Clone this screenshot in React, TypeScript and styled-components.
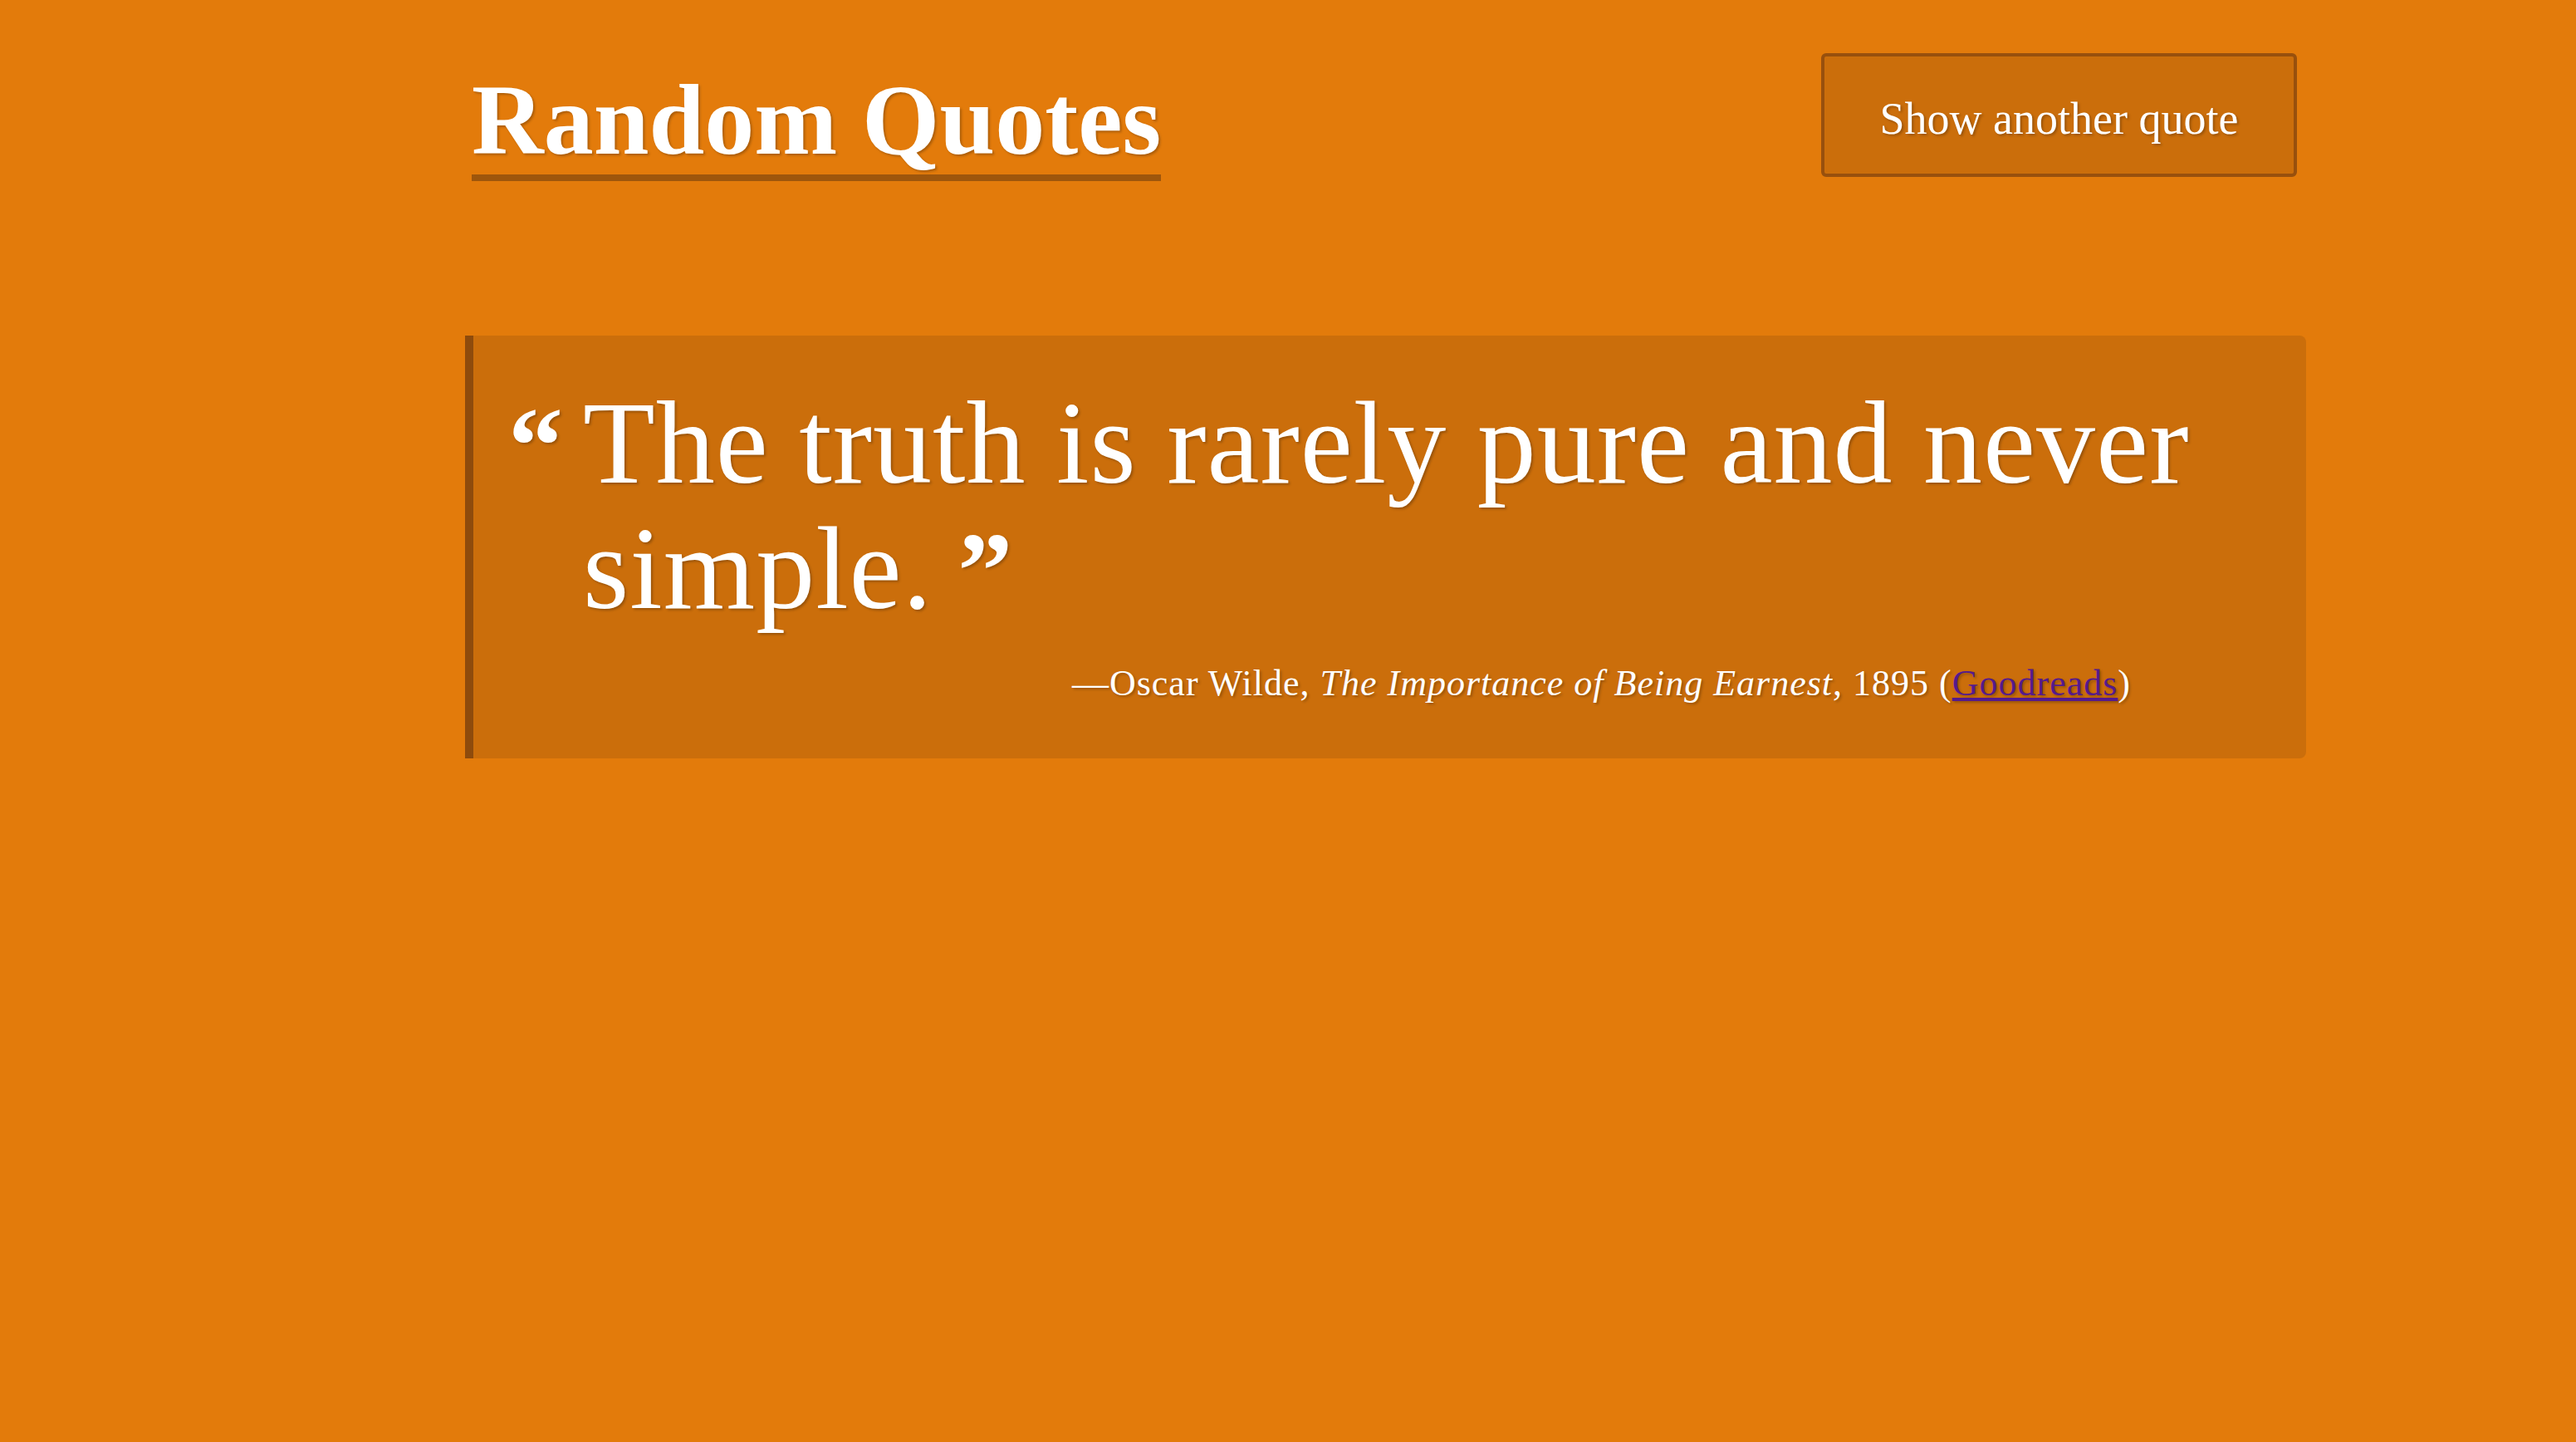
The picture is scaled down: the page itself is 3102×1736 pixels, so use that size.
import React from "react";
import styled, { createGlobalStyle } from "styled-components";

const GlobalStyle = createGlobalStyle`
  html, body {
    margin: 0;
    padding: 0;
    background: #e37b0b;
  }
  body {
    font-family: "Liberation Serif", "DejaVu Serif", serif;
    color: #ffffff;
  }
`;

const Page = styled.div`
  min-height: 1736px;
  box-sizing: border-box;
  padding: 64px 325px 0 560px;
  background: #e37b0b;
`;

const Header = styled.header`
  display: flex;
  justify-content: space-between;
  align-items: flex-start;
  padding: 0 11px 0 8px;
`;

const Title = styled.h1`
  display: inline-block;
  margin: 21px 0 0 0;
  font-family: "Liberation Serif", serif;
  font-weight: 700;
  font-size: 120px;
  line-height: 1;
  padding-bottom: 5px;
  border-bottom: 8px solid #9e560c;
  text-shadow: 2px 2px 3px rgba(0, 0, 0, 0.25);
`;

const Button = styled.button`
  width: 573px;
  height: 149px;
  box-sizing: border-box;
  padding: 8px 0 0 0;
  background: #cb6e0b;
  border: 4px solid #98500d;
  border-radius: 6px;
  color: #ffffff;
  font-family: "Liberation Serif", serif;
  font-size: 54px;
  text-shadow: 2px 2px 3px rgba(0, 0, 0, 0.25);
  cursor: pointer;
`;

const QuoteBlock = styled.blockquote`
  margin: 186px 0 0 0;
  background: #cb6e0b;
  border-left: 10px solid #8e4b0c;
  border-radius: 0 8px 8px 0;
  padding: 54px 40px 57px 42px;
  text-shadow: 2px 2px 3px rgba(0, 0, 0, 0.25);
`;

const QuoteRow = styled.div`
  display: flex;
  align-items: baseline;
`;

const Mark = styled.span`
  flex: 0 0 auto;
  width: 90px;
  font-family: "Liberation Serif", serif;
  font-weight: 700;
  font-size: 132px;
  line-height: 151px;
`;

const QuoteText = styled.p`
  flex: 1 1 auto;
  margin: 0;
  font-family: "Liberation Serif", serif;
  font-size: 142px;
  line-height: 151px;
  letter-spacing: 1px;
`;

const CloseMark = styled.span`
  font-weight: 700;
  font-size: 132px;
  line-height: 0;
  margin-left: 30px;
`;

const Attribution = styled.p`
  margin: 30px 0 0 0;
  padding-right: 171px;
  text-align: right;
  font-family: "Liberation Serif", serif;
  font-size: 44px;
  line-height: 66px;
  letter-spacing: 1px;
`;

const Work = styled.cite`
  font-style: italic;
`;

const Link = styled.a`
  color: #551a8b;
  text-decoration: underline;
`;

export default function App() {
  return (
    <>
      <GlobalStyle />
      <Page>
        <Header>
          <Title>Random Quotes</Title>
          <Button type="button">Show another quote</Button>
        </Header>
        <QuoteBlock>
          <QuoteRow>
            <Mark>“</Mark>
            <QuoteText>
              The truth is rarely pure and never simple.
              <CloseMark>”</CloseMark>
            </QuoteText>
          </QuoteRow>
          <Attribution>
            —Oscar Wilde, <Work>The Importance of Being Earnest</Work>, 1895 (
            <Link href="#goodreads">Goodreads</Link>)
          </Attribution>
        </QuoteBlock>
      </Page>
    </>
  );
}
